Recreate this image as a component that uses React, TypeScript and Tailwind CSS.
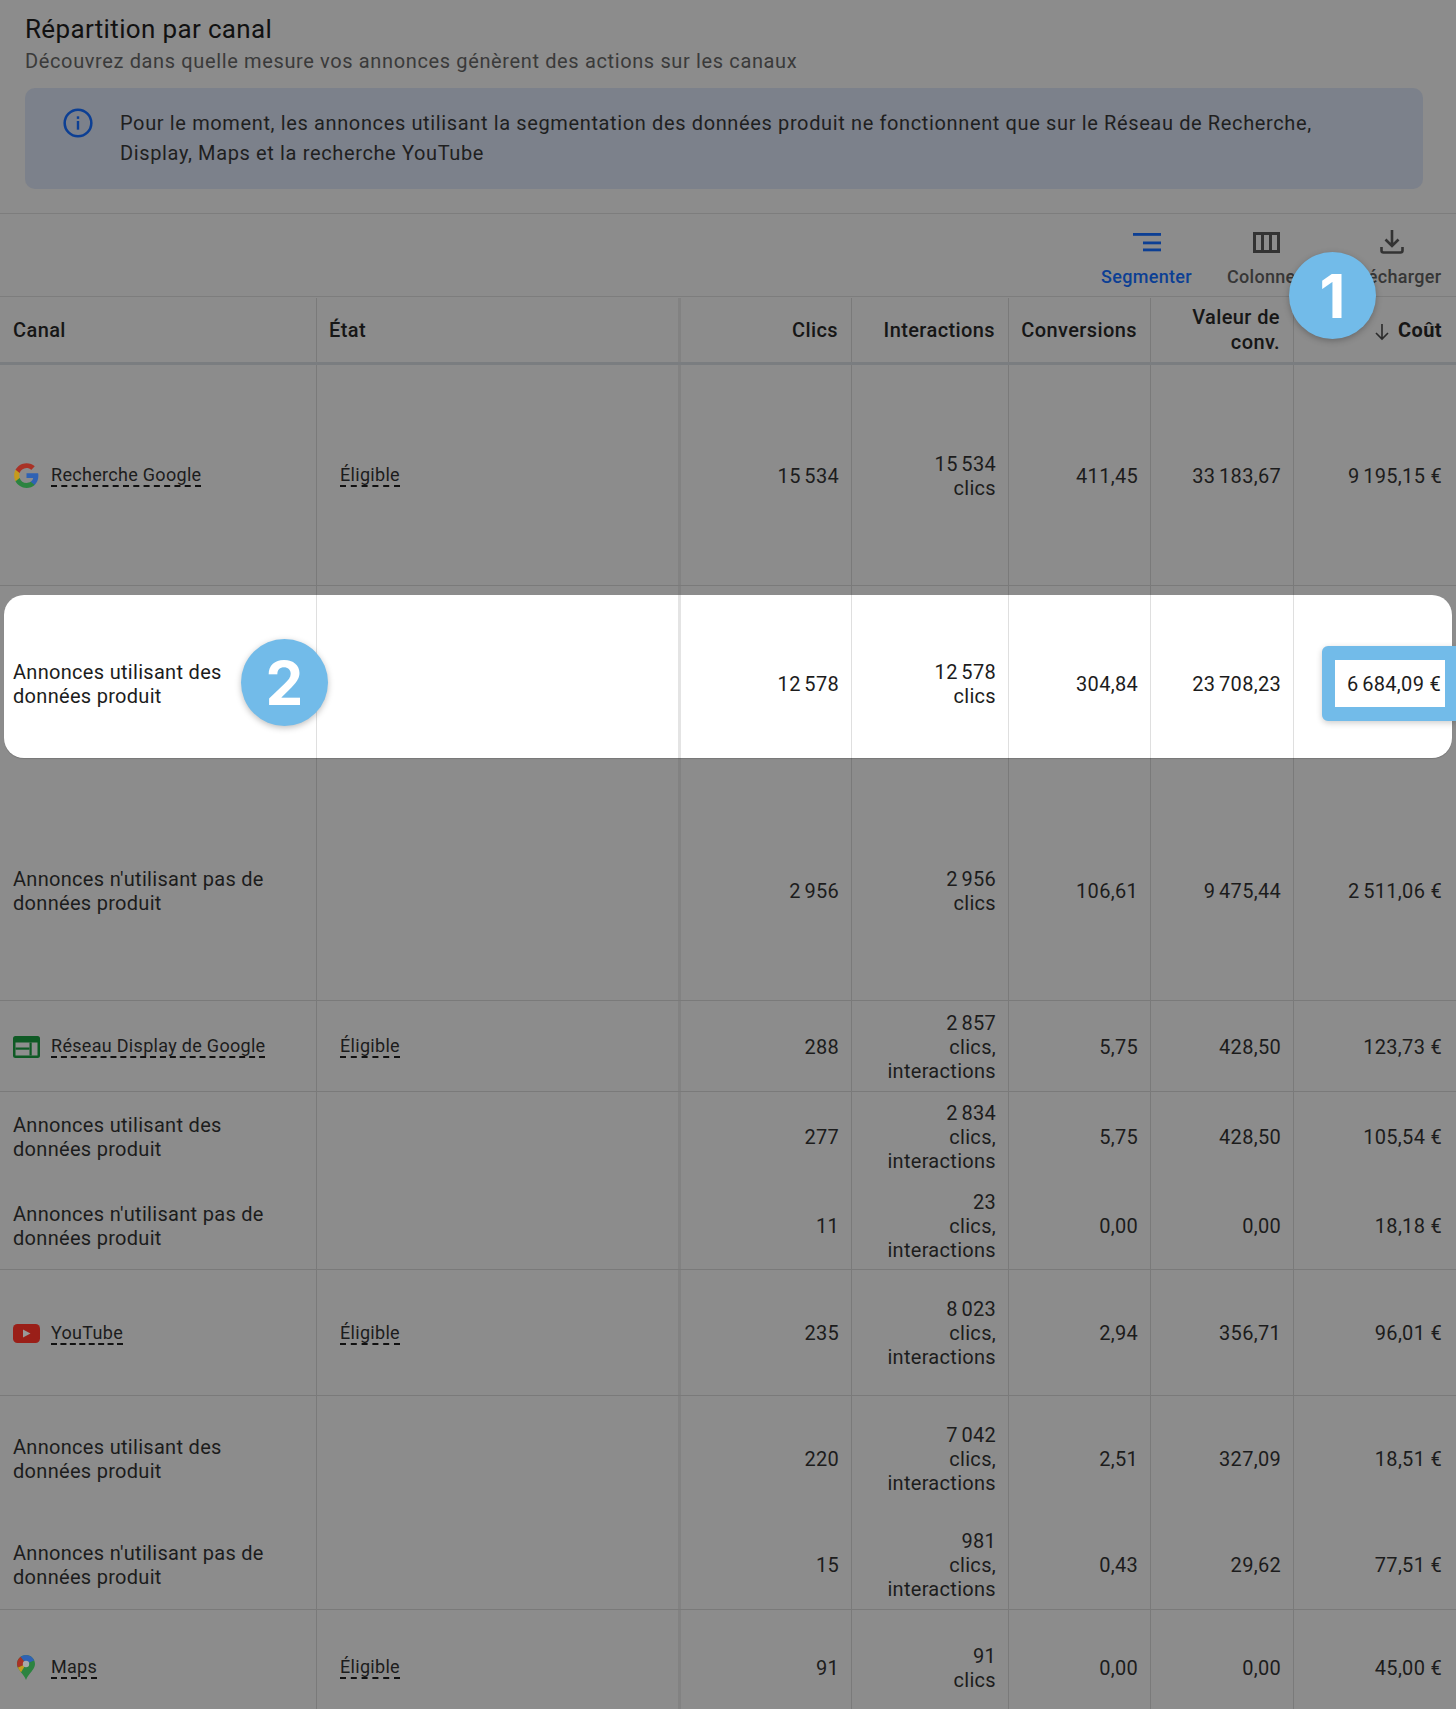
import React from 'react';

const columns = 'grid grid-cols-[317px_364px_171px_157px_142px_143px_162px]';
const lineCell = 'border-r border-[#7a7a7a]';
const thickCell = 'border-r-[3px] border-[#828282]';

const GoogleIcon: React.FC = () => (
  <svg width="27" height="27" viewBox="0 0 48 48" className="shrink-0">
    <path fill="#2f62b3" d="M45.1 24.5c0-1.6-.1-3.1-.4-4.5H24v8.5h11.8c-.5 2.8-2.1 5.1-4.4 6.7v5.6h7.1c4.2-3.8 6.6-9.6 6.6-16.3z" />
    <path fill="#2c8340" d="M24 46c5.9 0 10.9-2 14.5-5.2l-7.1-5.6c-2 1.3-4.5 2.1-7.4 2.1-5.7 0-10.5-3.8-12.2-9H4.5v5.8C8.1 41.1 15.5 46 24 46z" />
    <path fill="#c59b1c" d="M11.8 28.3c-.4-1.3-.7-2.8-.7-4.3s.2-3 .7-4.3v-5.8H4.5C3 16.9 2 20.4 2 24s1 7.1 2.5 10.1l7.3-5.8z" />
    <path fill="#a93226" d="M24 10.7c3.2 0 6.1 1.1 8.4 3.3l6.3-6.3C34.9 4.2 29.9 2 24 2 15.5 2 8.1 6.9 4.5 13.9l7.3 5.8c1.7-5.2 6.5-9 12.2-9z" />
  </svg>
);

const DisplayIcon: React.FC = () => (
  <svg width="27" height="22" viewBox="0 0 27 22" className="shrink-0">
    <rect width="27" height="22" rx="2.5" fill="#0f5a25" />
    <rect x="2.5" y="6.5" width="22" height="13" fill="#8e8e8e" />
    <rect x="2.5" y="11.5" width="14" height="2.2" fill="#0f5a25" />
    <rect x="16.5" y="6.5" width="2.2" height="13" fill="#0f5a25" />
  </svg>
);

const YouTubeIcon: React.FC = () => (
  <svg width="27" height="19" viewBox="0 0 27 19" className="shrink-0">
    <rect width="27" height="19" rx="4.5" fill="#9a1f18" />
    <path d="M10 5.5 17.5 9.5 10 13.5z" fill="#999999" />
  </svg>
);

const MapsIcon: React.FC = () => (
  <svg width="18" height="25" viewBox="0 0 18 25" className="ml-[4px] shrink-0">
    <defs>
      <clipPath id="pin">
        <path d="M9 0C4 0 0 4 0 9c0 6 6.5 9 9 16 2.5-7 9-10 9-16C18 4 14 0 9 0z" />
      </clipPath>
    </defs>
    <g clipPath="url(#pin)">
      <rect width="18" height="25" fill="#2c8340" />
      <polygon points="3,1 9,-1 18,-1 18,5 9,9" fill="#2f62b3" />
      <polygon points="-1,-1 3,1 9,9 -1,13.5" fill="#a93226" />
      <polygon points="-1,13.5 9,9 3,19 -1,19" fill="#c59b1c" />
    </g>
    <circle cx="9" cy="9" r="3.2" fill="#a8a8a8" />
  </svg>
);

const InfoIcon: React.FC = () => (
  <svg width="32" height="32" viewBox="0 0 24 24" fill="none" className="shrink-0">
    <circle cx="12" cy="12" r="10" stroke="#0c3f94" strokeWidth="1.9" />
    <rect x="11.1" y="10.5" width="1.8" height="6.5" fill="#0c3f94" />
    <rect x="11.1" y="7" width="1.8" height="1.9" fill="#0c3f94" />
  </svg>
);

const SegmentIcon: React.FC = () => (
  <svg width="28" height="20" viewBox="0 0 28 20">
    <rect x="0" y="1" width="28" height="2.8" fill="#0c3f94" />
    <rect x="10" y="9.5" width="18" height="2.8" fill="#0c3f94" />
    <rect x="10" y="16.5" width="18" height="2.8" fill="#0c3f94" />
  </svg>
);

const ColumnsIcon: React.FC = () => (
  <svg width="27" height="21" viewBox="0 0 27 21" fill="none">
    <rect x="1.5" y="1.5" width="24" height="18" stroke="#333333" strokeWidth="3" />
    <path d="M9.5 1v19M17.5 1v19" stroke="#333333" strokeWidth="3" />
  </svg>
);

const DownloadIcon: React.FC = () => (
  <svg width="24" height="24" viewBox="0 0 24 24" fill="none">
    <path d="M12 0v16M5.5 9.5l6.5 6.5 6.5-6.5" stroke="#333333" strokeWidth="2.6" />
    <path d="M1.5 17v3.5a2 2 0 0 0 2 2h17a2 2 0 0 0 2-2V17" stroke="#333333" strokeWidth="2.6" />
  </svg>
);

const ToolButton: React.FC<{ label: string; icon: React.ReactNode; active?: boolean; width: string }> = ({ label, icon, active, width }) => (
  <div className={`flex flex-col items-center ${width}`}>
    <div className="flex h-[32px] items-center">{icon}</div>
    <span className={`mt-[7px] whitespace-nowrap text-[18px] font-medium leading-[24px] tracking-[0.3px] ${active ? 'text-[#0c3f94]' : 'text-[#363636]'}`}>
      {label}
    </span>
  </div>
);

const Dashed: React.FC<{ children: React.ReactNode }> = ({ children }) => (
  <span className="border-b-2 border-dashed border-[#111111] text-[18px] leading-[21px]">{children}</span>
);

// the column rules sit in their own layer so the white band can cover them
const ColumnLines: React.FC<{ thin: string; thick: string; className?: string }> = ({ thin, thick, className }) => (
  <div className={`${columns} ${className ?? ''}`}>
    <div className={`border-r ${thin}`} />
    <div className={`border-r-[3px] ${thick}`} />
    <div className={`border-r ${thin}`} />
    <div className={`border-r ${thin}`} />
    <div className={`border-r ${thin}`} />
    <div className={`border-r ${thin}`} />
  </div>
);

interface RowData {
  height: string;
  canal: string;
  icon?: React.ReactNode;
  clics: string;
  interactions: string[];
  conversions: string;
  valeur: string;
  cout: string;
  last?: boolean;
  highlight?: boolean;
}

const n = '\u2006';

const Num: React.FC<{ children: React.ReactNode; className?: string }> = ({ children, className }) => (
  <div className={`relative flex items-center justify-end pr-[13px] pt-[1px] text-right ${className ?? ''}`}>{children}</div>
);

const Row: React.FC<RowData> = ({ height, canal, icon, clics, interactions, conversions, valeur, cout, last, highlight }) => (
  <div className={`relative ${columns} ${height} ${last ? 'border-b border-[#7a7a7a]' : ''}`}>
    <ColumnLines thin="border-[#7a7a7a]" thick="border-[#828282]" className="absolute inset-0" />
    {highlight && (
      <div className="absolute left-[4px] top-[9px] h-[163px] w-[1448px] overflow-hidden rounded-[20px] bg-white shadow-[0_1px_1px_rgba(0,0,0,0.15)]">
        <ColumnLines thin="border-[#dfdfdf]" thick="border-[#e4e4e4]" className="-ml-[4px] h-full" />
      </div>
    )}
    <div className="relative flex items-center pl-[13px] pr-[20px] pt-[1px]">
      {icon ? (
        <>
          <span className="flex w-[38px] justify-start">{icon}</span>
          <Dashed>{canal}</Dashed>
        </>
      ) : (
        <span>{canal}</span>
      )}
    </div>
    <div className="relative flex items-center pl-[23px] pt-[1px]">
      {icon && <Dashed>Éligible</Dashed>}
    </div>
    <Num>{clics}</Num>
    <Num>
      <span>
        {interactions.map((t) => (
          <span key={t} className="block">{t}</span>
        ))}
      </span>
    </Num>
    <Num>{conversions}</Num>
    <Num>{valeur}</Num>
    <Num className="pr-[14px]">
      {highlight ? (
        <span className="absolute right-0 top-[60px] flex h-[75px] w-[134px] items-center justify-end rounded-l-[6px] border-y-[14px] border-l-[13px] border-r-[11px] border-[#72bbe9] bg-white pr-[4px] shadow-[0_2px_6px_rgba(0,0,0,0.2)]">
          {cout}
        </span>
      ) : (
        cout
      )}
    </Num>
  </div>
);

const Badge: React.FC<{ value: string; className: string }> = ({ value, className }) => (
  <div className={`absolute z-20 flex h-[87px] w-[87px] items-center justify-center rounded-full bg-[#72bbe9] text-[60px] font-bold text-white shadow-[0_2px_6px_rgba(0,0,0,0.25)] [font-family:Inter,sans-serif] ${className}`}>
    {value}
  </div>
);

const rows: RowData[] = [
  { height: 'h-[221px]', canal: 'Recherche Google', icon: <GoogleIcon />, clics: `15${n}534`, interactions: [`15${n}534`, 'clics'], conversions: '411,45', valeur: `33${n}183,67`, cout: `9${n}195,15 €`, last: true },
  { height: 'h-[194px]', canal: 'Annonces utilisant des données produit', clics: `12${n}578`, interactions: [`12${n}578`, 'clics'], conversions: '304,84', valeur: `23${n}708,23`, cout: `6${n}684,09 €`, highlight: true },
  { height: 'h-[221px]', canal: "Annonces n'utilisant pas de données produit", clics: `2${n}956`, interactions: [`2${n}956`, 'clics'], conversions: '106,61', valeur: `9${n}475,44`, cout: `2${n}511,06 €`, last: true },
  { height: 'h-[91px]', canal: 'Réseau Display de Google', icon: <DisplayIcon />, clics: '288', interactions: [`2${n}857`, 'clics,', 'interactions'], conversions: '5,75', valeur: '428,50', cout: '123,73 €', last: true },
  { height: 'h-[89px]', canal: 'Annonces utilisant des données produit', clics: '277', interactions: [`2${n}834`, 'clics,', 'interactions'], conversions: '5,75', valeur: '428,50', cout: '105,54 €' },
  { height: 'h-[89px]', canal: "Annonces n'utilisant pas de données produit", clics: '11', interactions: ['23', 'clics,', 'interactions'], conversions: '0,00', valeur: '0,00', cout: '18,18 €', last: true },
  { height: 'h-[126px]', canal: 'YouTube', icon: <YouTubeIcon />, clics: '235', interactions: [`8${n}023`, 'clics,', 'interactions'], conversions: '2,94', valeur: '356,71', cout: '96,01 €', last: true },
  { height: 'h-[124px]', canal: 'Annonces utilisant des données produit', clics: '220', interactions: [`7${n}042`, 'clics,', 'interactions'], conversions: '2,51', valeur: '327,09', cout: '18,51 €' },
  { height: 'h-[90px]', canal: "Annonces n'utilisant pas de données produit", clics: '15', interactions: ['981', 'clics,', 'interactions'], conversions: '0,43', valeur: '29,62', cout: '77,51 €', last: true },
  { height: 'h-[114px]', canal: 'Maps', icon: <MapsIcon />, clics: '91', interactions: ['91', 'clics'], conversions: '0,00', valeur: '0,00', cout: '45,00 €' },
];

export default function App() {
  return (
    <div className="relative h-[1709px] w-[1456px] overflow-hidden bg-[#8c8c8c] text-[#1c1c1c] [font-family:Roboto,sans-serif]">
      <section className="pl-[25px] pr-[33px] pt-[13px]">
        <h1 className="text-[26px] leading-[32px] tracking-[0.35px] text-[#111111]">Répartition par canal</h1>
        <p className="mt-[2px] text-[20px] leading-[28px] tracking-[0.63px] text-[#3a3a3a]">
          Découvrez dans quelle mesure vos annonces génèrent des actions sur les canaux
        </p>
        <div className="mt-[13px] flex h-[101px] gap-[26px] rounded-[10px] bg-[#7c818b] pl-[37px] pr-[60px] pt-[19px]">
          <InfoIcon />
          <p className="pt-[1px] text-[20px] leading-[30px] tracking-[0.63px] text-[#1f1f1f]">
            Pour le moment, les annonces utilisant la segmentation des données produit ne fonctionnent que sur le Réseau de Recherche, Display, Maps et la recherche YouTube
          </p>
        </div>
      </section>

      <div className="mt-[24px] flex h-[84px] justify-end border-y border-[#7d7d7d] pt-[12px]">
        <ToolButton label="Segmenter" icon={<SegmentIcon />} active width="w-[115px]" />
        <ToolButton label="Colonnes" icon={<ColumnsIcon />} width="w-[124px]" />
        <ToolButton label="Télécharger" icon={<DownloadIcon />} width="w-[128px]" />
      </div>

      <div className={`${columns} h-[68px] border-b-[3px] border-[#7a7d80] pt-[1px] text-[20px] font-medium leading-[25px] tracking-[0.4px] text-[#161616]`}>
        <div className={`flex items-center pl-[13px] ${lineCell}`}>Canal</div>
        <div className={`flex items-center pl-[12px] ${thickCell}`}>État</div>
        <div className={`flex items-center justify-end pr-[13px] ${lineCell}`}>Clics</div>
        <div className={`flex items-center justify-end pr-[13px] ${lineCell}`}>Interactions</div>
        <div className={`flex items-center justify-end whitespace-nowrap pr-[13px] ${lineCell}`}>Conversions</div>
        <div className={`flex items-center justify-end pr-[13px] text-right ${lineCell}`}>Valeur de<br />conv.</div>
        <div className="flex items-center justify-end gap-[8px] pr-[14px] font-bold">
          <svg width="16" height="18" viewBox="0 0 16 18" fill="none" className="mt-[3px]">
            <path d="M8 1v15M2 10l6 6 6-6" stroke="#2a2a2a" strokeWidth="1.6" />
          </svg>
          Coût
        </div>
      </div>

      <div className="text-[20px] leading-[24px] tracking-[0.3px]">
        {rows.map((row) => (
          <Row key={row.canal + row.clics} {...row} />
        ))}
      </div>

      <Badge value="1" className="left-[1289px] top-[252px]" />
      <Badge value="2" className="left-[241px] top-[639px]" />
    </div>
  );
}
